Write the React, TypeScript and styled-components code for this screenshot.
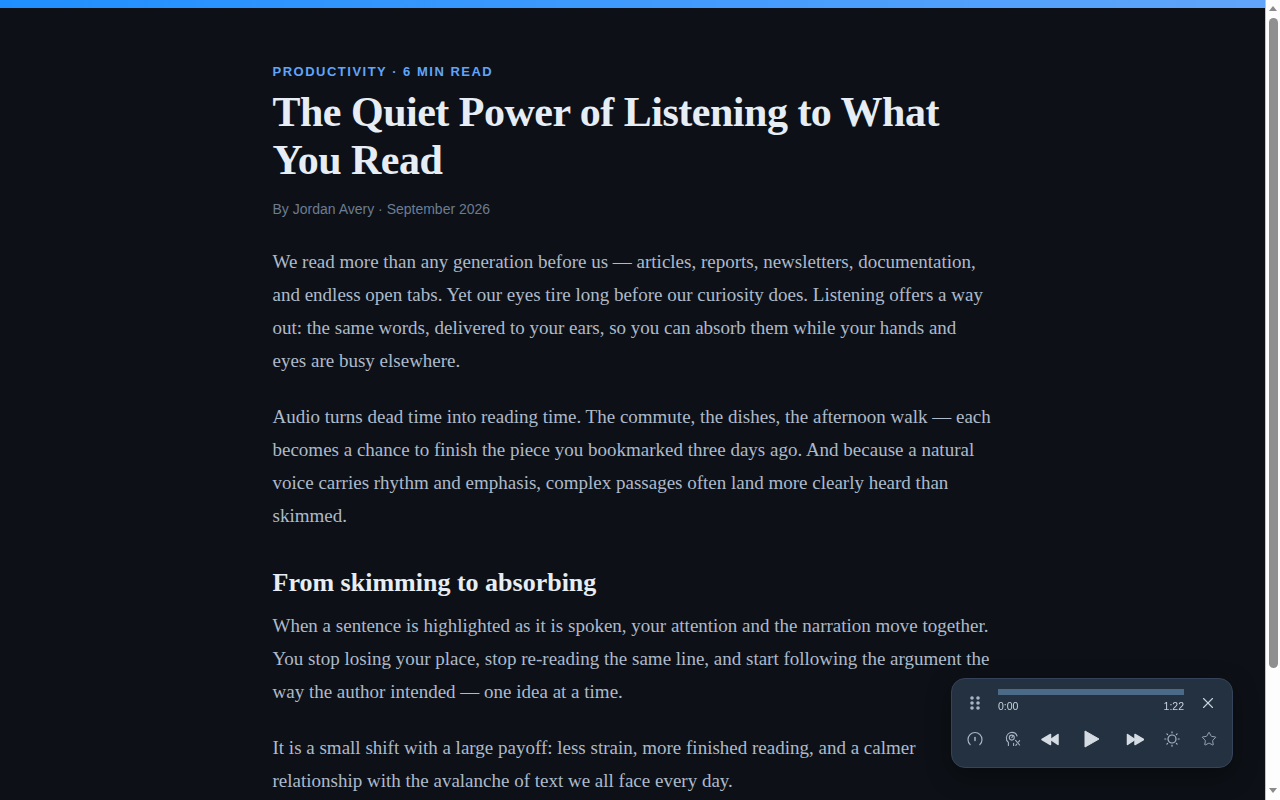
import React from 'react'
import styled, { createGlobalStyle } from 'styled-components'
import { Star, X } from 'lucide-react'

const GlobalStyle = createGlobalStyle`
  html, body {
    margin: 0;
    padding: 0;
    background: #0d1117;
  }
  body {
    padding-right: 15px;
  }
`

const ProgressStrip = styled.div`
  position: fixed;
  top: 0;
  left: 0;
  right: 15px;
  height: 8px;
  background: linear-gradient(90deg, #1f8fff, #60a5fa);
`

// the browser's own scrollbar does not show in the capture, so it is drawn over the page edge
const ScrollBar = styled.div`
  position: fixed;
  top: 0;
  right: 0;
  bottom: 0;
  box-sizing: border-box;
  width: 15px;
  display: flex;
  flex-direction: column;
  align-items: center;
  padding: 6px 0 7px;
  background: #fdfdfd;
  border-left: 1px solid #c4c4c4;
`

const ScrollArrow = styled.div<{ $down?: boolean }>`
  flex: none;
  width: 0;
  height: 0;
  border-left: 4.5px solid transparent;
  border-right: 4.5px solid transparent;
  border-top: ${(props) => (props.$down ? '5px solid #8a8a8a' : 'none')};
  border-bottom: ${(props) => (props.$down ? 'none' : '5px solid #8a8a8a')};
`

const ScrollThumb = styled.div`
  flex: none;
  width: 9px;
  height: 650px;
  margin: 7px 0 auto;
  background: #8f8f8f;
  border-radius: 5px;
`

const Article = styled.article`
  width: 720px;
  margin: 0 auto;
  padding: 64px 0 146px;
  font-family: 'Liberation Serif', serif;
`

const Kicker = styled.div`
  font-family: 'Liberation Sans', sans-serif;
  font-size: 13px;
  font-weight: 700;
  line-height: 15px;
  letter-spacing: 1.5px;
  color: #60a5fa;
  text-transform: uppercase;
`

const Title = styled.h1`
  margin: 9px 0 0;
  font-size: 42px;
  font-weight: 700;
  line-height: 48px;
  letter-spacing: -0.5px;
  color: #e6edf5;
`

const Byline = styled.div`
  margin: 15px 0 0;
  font-family: 'Liberation Sans', sans-serif;
  font-size: 14px;
  line-height: 20px;
  color: #6b7c93;
`

const Body = styled.div`
  margin-top: 25.7px;
`

const Paragraph = styled.p`
  margin: 0 0 22px;
  font-size: 19px;
  line-height: 33.25px;
  color: #adbacb;
`

const SectionTitle = styled.h2`
  margin: 33.3px 0 9px;
  font-size: 26px;
  font-weight: 700;
  line-height: 34px;
  color: #e6edf5;
`

const Player = styled.div`
  position: fixed;
  right: 47px;
  bottom: 32px;
  box-sizing: border-box;
  width: 282px;
  height: 90px;
  padding: 10px 9px 0;
  background: #243140;
  border: 1px solid #35445a;
  border-radius: 14px;
  box-shadow: 0 8px 24px rgba(0, 0, 0, 0.4);
  font-family: 'Liberation Sans', sans-serif;
`

const TopRow = styled.div`
  display: flex;
  align-items: center;
  height: 28px;
`

const Grip = styled.svg`
  flex: none;
  width: 10px;
  height: 14px;
  margin: 0 18px 0 9px;
  fill: #a9b5c4;
`

const Timeline = styled.div`
  flex: 1;
  align-self: flex-start;
  display: flex;
  flex-direction: column;
`

const Track = styled.div`
  height: 6px;
  background: #4a6a88;
`

const Times = styled.div`
  display: flex;
  justify-content: space-between;
  margin-top: 5px;
  font-size: 10.5px;
  line-height: 13px;
  color: #c9d3de;
`

const Close = styled.button`
  flex: none;
  display: flex;
  padding: 0;
  margin: 0 6px 0 15px;
  background: none;
  border: none;
  color: #c9d3de;
`

const Controls = styled.div`
  display: flex;
  align-items: center;
  justify-content: space-between;
  height: 22px;
  margin-top: 11px;
`

const IconButton = styled.button`
  flex: none;
  display: flex;
  align-items: center;
  justify-content: center;
  width: 28px;
  height: 22px;
  padding: 0;
  background: none;
  border: none;
  color: #a9b5c4;
`

const TransportButton = styled(IconButton)<{ $wide?: boolean }>`
  width: ${(props) => (props.$wide ? '37px' : '28px')};
  color: #d5dbe2;
`

const Gauge = () => (
  <svg width="16" height="16" viewBox="0 0 16 16" fill="none" stroke="currentColor" strokeWidth="1.2" strokeLinecap="round">
    <path d="M3.2 13.6A7 7 0 1 1 12.8 13.6" />
    <path d="M8 6.5V9.5" strokeWidth="1.5" />
  </svg>
)

const HeadGauge = () => (
  <svg width="16" height="16" viewBox="0 0 16 16" fill="none" stroke="currentColor" strokeWidth="1.1" strokeLinecap="round">
    <path d="M3.4 14.4V11.4C1.9 10.2 1.2 8.6 1.4 6.8C1.7 3.6 4.2 1.4 7 1.4C9.4 1.4 11.4 2.9 12 5" />
    <circle cx="6.8" cy="6.6" r="2.5" />
    <path d="M6.8 6.6L7.6 5.6" />
    <path d="M8.6 14.4V12.4" />
    <path d="M10.6 9.4L14.6 14M14.6 9.6L13.6 10.8M11.8 13.2L10.8 14.4" />
  </svg>
)

const Rewind = () => (
  <svg width="18" height="13" viewBox="0 0 18 13" fill="currentColor" stroke="currentColor" strokeWidth="1.5" strokeLinejoin="round">
    <path d="M9.5 1.5V11.5L1 6.5Z" />
    <path d="M17 1.5V11.5L9.5 6.5Z" />
  </svg>
)

const Forward = () => (
  <svg width="20" height="13" viewBox="0 0 20 13" fill="currentColor" stroke="currentColor" strokeWidth="1.5" strokeLinejoin="round">
    <path d="M11 1.5V11.5L19.5 6.5Z" />
    <path d="M3.5 1.5V11.5L11 6.5Z" />
  </svg>
)

const Play = () => (
  <svg width="16" height="18" viewBox="0 0 16 18" fill="currentColor" stroke="currentColor" strokeWidth="1" strokeLinejoin="round">
    <path d="M1 1V17L15 9Z" />
  </svg>
)

const SunIcon = () => (
  <svg width="16" height="16" viewBox="0 0 16 16" fill="none" stroke="currentColor" strokeWidth="1.2" strokeLinecap="round">
    <circle cx="8" cy="8" r="4" />
    <path d="M8 .8V1.8M8 14.2V15.2M.8 8H1.8M14.2 8H15.2M2.9 2.9L3.6 3.6M12.4 12.4L13.1 13.1M2.9 13.1L3.6 12.4M12.4 3.6L13.1 2.9" />
  </svg>
)

const App = () => {
  return (
    <>
      <GlobalStyle />
      <ProgressStrip />
      <Article>
        <Kicker>Productivity · 6 min read</Kicker>
        <Title>The Quiet Power of Listening to What You Read</Title>
        <Byline>By Jordan Avery · September 2026</Byline>
        <Body>
          <Paragraph>
            We read more than any generation before us — articles, reports, newsletters, documentation, and endless open
            tabs. Yet our eyes tire long before our curiosity does. Listening offers a way out: the same words, delivered
            to your ears, so you can absorb them while your hands and eyes are busy elsewhere.
          </Paragraph>
          <Paragraph>
            Audio turns dead time into reading time. The commute, the dishes, the afternoon walk — each becomes a chance
            to finish the piece you bookmarked three days ago. And because a natural voice carries rhythm and emphasis,
            complex passages often land more clearly heard than skimmed.
          </Paragraph>
          <SectionTitle>From skimming to absorbing</SectionTitle>
          <Paragraph>
            When a sentence is highlighted as it is spoken, your attention and the narration move together. You stop
            losing your place, stop re-reading the same line, and start following the argument the way the author
            intended — one idea at a time.
          </Paragraph>
          <Paragraph>
            It is a small shift with a large payoff: less strain, more finished reading, and a calmer relationship with
            the avalanche of text we all face every day.
          </Paragraph>
        </Body>
      </Article>
      <Player>
        <TopRow>
          <Grip viewBox="0 0 10 14">
            <circle cx="2" cy="2" r="1.8" />
            <circle cx="8" cy="2" r="1.8" />
            <circle cx="2" cy="7" r="1.8" />
            <circle cx="8" cy="7" r="1.8" />
            <circle cx="2" cy="12" r="1.8" />
            <circle cx="8" cy="12" r="1.8" />
          </Grip>
          <Timeline>
            <Track />
            <Times>
              <span>0:00</span>
              <span>1:22</span>
            </Times>
          </Timeline>
          <Close>
            <X size={18} strokeWidth={1.5} />
          </Close>
        </TopRow>
        <Controls>
          <IconButton>
            <Gauge />
          </IconButton>
          <IconButton>
            <HeadGauge />
          </IconButton>
          <TransportButton>
            <Rewind />
          </TransportButton>
          <TransportButton $wide>
            <Play />
          </TransportButton>
          <TransportButton>
            <Forward />
          </TransportButton>
          <IconButton>
            <SunIcon />
          </IconButton>
          <IconButton>
            <Star size={16} strokeWidth={1.3} />
          </IconButton>
        </Controls>
      </Player>
      <ScrollBar>
        <ScrollArrow />
        <ScrollThumb />
        <ScrollArrow $down />
      </ScrollBar>
    </>
  )
}

export default App
